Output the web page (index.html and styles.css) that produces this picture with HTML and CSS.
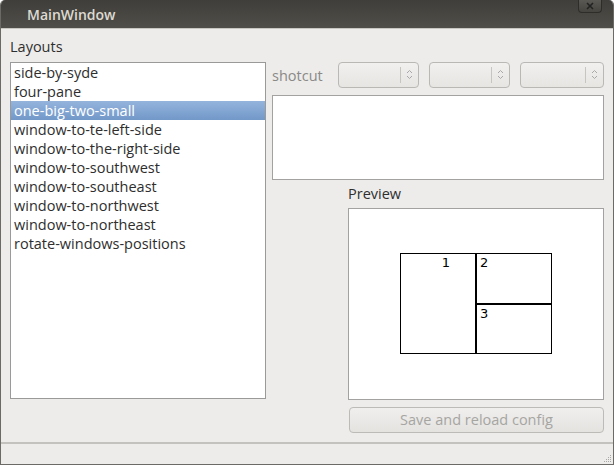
FILE: index.html
```html
<!DOCTYPE html>
<html>
<head>
<meta charset="utf-8">
<link rel="stylesheet" href="styles.css">
</head>
<body>
<div class="window">
  <div class="titlebar">
    <span class="title">MainWindow</span>
    <div class="close">
      <svg width="10" height="8" viewBox="0 0 10 8"><path d="M2 1 L8 7 M8 1 L2 7" stroke="#222" stroke-width="1.6"/></svg>
    </div>
  </div>
  <div class="content">
    <div class="leftcol">
      <div class="label">Layouts</div>
      <ul class="list">
        <li>side-by-syde</li>
        <li>four-pane</li>
        <li class="sel">one-big-two-small</li>
        <li>window-to-te-left-side</li>
        <li>window-to-the-right-side</li>
        <li>window-to-southwest</li>
        <li>window-to-southeast</li>
        <li>window-to-northwest</li>
        <li>window-to-northeast</li>
        <li>rotate-windows-positions</li>
      </ul>
    </div>
    <div class="rightcol">
      <div class="shortcut-row">
        <span class="shot-label">shotcut</span>
        <div class="combo c1"><span class="div"></span><svg class="arrows" width="7" height="11" viewBox="0 0 7 11"><path d="M1 4 L3.5 1.5 L6 4 M1 7 L3.5 9.5 L6 7" fill="none" stroke="#a8a8a8" stroke-width="1"/></svg></div>
        <div class="combo c2"><span class="div"></span><svg class="arrows" width="7" height="11" viewBox="0 0 7 11"><path d="M1 4 L3.5 1.5 L6 4 M1 7 L3.5 9.5 L6 7" fill="none" stroke="#a8a8a8" stroke-width="1"/></svg></div>
        <div class="combo c3"><span class="div"></span><svg class="arrows" width="7" height="11" viewBox="0 0 7 11"><path d="M1 4 L3.5 1.5 L6 4 M1 7 L3.5 9.5 L6 7" fill="none" stroke="#a8a8a8" stroke-width="1"/></svg></div>
      </div>
      <div class="textarea"></div>
      <div class="preview-col">
        <div class="label preview-label">Preview</div>
        <div class="preview">
          <div class="diagram">
            <div class="pane big"><span class="num n1">1</span></div>
            <div class="smalls">
              <div class="pane small top"><span class="num">2</span></div>
              <div class="pane small bottom"><span class="num">3</span></div>
            </div>
          </div>
        </div>
        <div class="button">Save and reload config</div>
      </div>
    </div>
  </div>
  <div class="statusbar">
    <svg class="grip" width="10" height="10" viewBox="0 0 10 10" fill="#a9a8a4">
      <rect x="8" y="2" width="1" height="1"/><rect x="6" y="4" width="1" height="1"/><rect x="8" y="4" width="1" height="1"/>
      <rect x="4" y="6" width="1" height="1"/><rect x="6" y="6" width="1" height="1"/><rect x="8" y="6" width="1" height="1"/>
      <rect x="2" y="8" width="1" height="1"/><rect x="4" y="8" width="1" height="1"/><rect x="6" y="8" width="1" height="1"/><rect x="8" y="8" width="1" height="1"/>
    </svg>
  </div>
</div>
</body>
</html>
```

FILE: styles.css
```css
html, body {
  margin: 0;
  padding: 0;
  background: #ffffff;
}
body {
  font-family: "Open Sans", "DejaVu Sans", sans-serif;
  font-size: 14.5px;
  color: #3c3c3c;
}
.window {
  width: 614px;
  height: 465px;
  box-sizing: border-box;
  background: #edecea;
  border-left: 1px solid #6b6a66;
  border-right: 1px solid #6b6a66;
  border-bottom: 1px solid #6b6a66;
  border-radius: 5px 5px 0 0;
  overflow: hidden;
  display: flex;
  flex-direction: column;
}
.titlebar {
  height: 28px;
  flex: none;
  background: linear-gradient(#3f3e3a, #4f4e49);
  border-bottom: 1px solid #c9c7c2;
  display: flex;
  align-items: center;
  position: relative;
  margin: 0 -1px;
}
.title {
  margin-left: 27px;
  color: #dedad1;
  font-weight: 600;
  font-size: 14px;
}
.close {
  position: absolute;
  right: 12px;
  top: -1px;
  width: 22px;
  height: 13px;
  border: 1px solid #2e2d2a;
  border-top: none;
  border-radius: 0 0 4px 4px;
  background: linear-gradient(#5b5a55, #45443f);
  display: flex;
  align-items: center;
  justify-content: center;
}
.content {
  flex: 1;
  display: flex;
  padding: 7px 9px 0 9px;
  gap: 6px;
}
.leftcol {
  width: 256px;
  display: flex;
  flex-direction: column;
}
.label {
  color: #2f2f2f;
  height: 26px;
  line-height: 22px;
}
.list {
  list-style: none;
  margin: 0;
  padding: 0;
  height: 337px;
  box-sizing: border-box;
  background: #fff;
  border: 1px solid #9a9a98;
}
.list li {
  height: 19px;
  line-height: 19px;
  padding-left: 3px;
  color: #2e2e2e;
  white-space: nowrap;
}
.list li.sel {
  background: linear-gradient(#94b4dc, #7298c9);
  color: #ffffff;
}
.rightcol {
  flex: 1;
  display: flex;
  flex-direction: column;
}
.shortcut-row {
  height: 26px;
  display: flex;
  align-items: center;
  margin-top: 26px;
}
.shot-label {
  color: #8a8987;
  width: 66px;
  flex: none;
}
.combo {
  height: 26px;
  box-sizing: border-box;
  border: 1px solid #b9b8b5;
  border-radius: 4px;
  background: linear-gradient(#f1f0ee, #e6e5e2);
  position: relative;
  flex: none;
}
.c1 { width: 81px; margin-right: 10px; }
.c2 { width: 81px; margin-right: 10px; }
.c3 { width: 84px; }
.combo .div {
  position: absolute;
  right: 17px;
  top: 4px;
  height: 16px;
  border-left: 1px solid #c6c5c2;
}
.combo .arrows {
  position: absolute;
  right: 5px;
  top: 6px;
}
.textarea {
  margin-top: 7px;
  width: 332px;
  height: 85px;
  box-sizing: border-box;
  background: #fff;
  border: 1px solid #a3a2a0;
}
.preview-col {
  margin-left: 76px;
  width: 256px;
  display: flex;
  flex-direction: column;
}
.preview-label {
  margin-top: 4px;
  height: 24px;
  line-height: 20px;
}
.preview {
  height: 192px;
  box-sizing: border-box;
  background: #fff;
  border: 1px solid #a3a2a0;
  position: relative;
}
.diagram {
  position: absolute;
  left: 51px;
  top: 44px;
  display: flex;
}
.pane {
  box-sizing: border-box;
  border: 1px solid #000;
  font-family: "DejaVu Sans", sans-serif;
  font-size: 13px;
  color: #000;
}
.big {
  width: 76px;
  height: 101px;
  text-align: right;
}
.n1 {
  display: inline-block;
  margin-right: 25px;
  margin-top: 1px;
}
.smalls {
  display: flex;
  flex-direction: column;
  margin-left: -1px;
}
.small {
  width: 77px;
  height: 51px;
  border-left-width: 2px;
  padding-left: 3px;
  padding-top: 1px;
}
.small.bottom {
  margin-top: -1px;
  border-top-width: 2px;
}
.num { display: inline-block; }
.button {
  margin-top: 7px;
  height: 26px;
  box-sizing: border-box;
  border: 1px solid #bcbbb8;
  border-radius: 4px;
  background: linear-gradient(#f0efed, #e4e3e0);
  color: #a6a5a2;
  text-align: center;
  line-height: 24px;
  margin-left: 1px;
  width: 255px;
}
.statusbar {
  height: 20px;
  flex: none;
  border-top: 2px solid #c3c2bf;
  position: relative;
}
.grip {
  position: absolute;
  right: 1px;
  bottom: 1px;
}
```
